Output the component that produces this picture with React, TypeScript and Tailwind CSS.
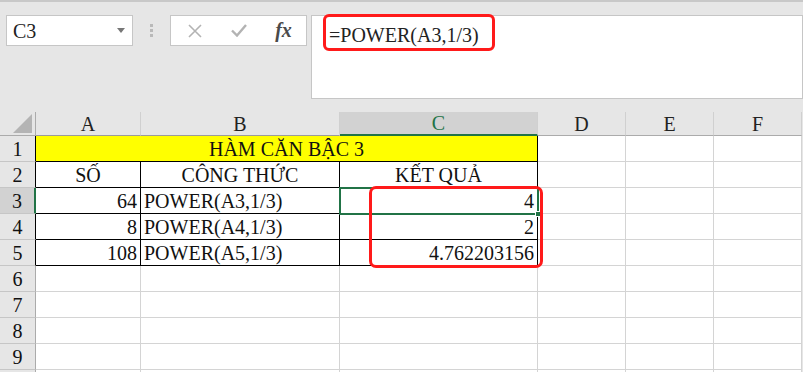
import React from 'react';

const cols = ['A', 'B', 'C', 'D', 'E', 'F'];

type Cell = { v: string; align?: 'left' | 'right' | 'center' };

const rows: Cell[][] = [
  [{ v: 'SỐ', align: 'center' }, { v: 'CÔNG THỨC', align: 'center' }, { v: 'KẾT QUẢ', align: 'center' }],
  [{ v: '64', align: 'right' }, { v: 'POWER(A3,1/3)', align: 'left' }, { v: '4', align: 'right' }],
  [{ v: '8', align: 'right' }, { v: 'POWER(A4,1/3)', align: 'left' }, { v: '2', align: 'right' }],
  [{ v: '108', align: 'right' }, { v: 'POWER(A5,1/3)', align: 'left' }, { v: '4.762203156', align: 'right' }],
];

const alignCls = {
  left: 'justify-start pl-[3px]',
  right: 'justify-end pr-[3px]',
  center: 'justify-center',
};

const RowHead = ({ n, table, active }: { n?: number; table?: boolean; active?: boolean }) => (
  <div
    className={`flex h-[26px] items-center justify-center border-b border-b-[#c6c6c6] ${
      active ? 'border-r-2 border-r-[#217346] bg-[#d2d2d2]' : table ? 'border-r border-r-black bg-[#e6e6e6]' : 'border-r border-r-[#ababab] bg-[#e6e6e6]'
    }`}
  >
    {n}
  </div>
);

const Blank = () => <div className="h-[26px] border-b border-r border-[#d4d4d4] bg-white" />;

export default function App() {
  return (
    <div className="relative h-[372px] w-[803px] overflow-hidden bg-[#e6e6e6] font-['Liberation_Serif',serif] text-[20px] text-black">
      {/* formula toolbar */}
      <div className="h-[112px] border-t-2 border-t-[#c8c8c8] pt-[13px]">
        <div className="flex items-start">
          <div className="ml-[6px] flex h-[31px] w-[127px] items-center justify-between border border-[#c6c6c6] bg-white pl-[6px] pr-[7px] text-[#222]">
            <span>C3</span>
            <svg width="8" height="5" viewBox="0 0 8 5">
              <path d="M0 0h8L4 5z" fill="#777" />
            </svg>
          </div>
          <div className="flex h-[31px] w-[37px] items-center justify-center">
            <svg width="4" height="14" viewBox="0 0 4 14">
              <rect x="0" y="0" width="3" height="3" fill="#b9b9b9" />
              <rect x="0" y="5" width="3" height="3" fill="#b9b9b9" />
              <rect x="0" y="10" width="3" height="3" fill="#b9b9b9" />
            </svg>
          </div>
          <div className="flex h-[31px] w-[137px] items-center border border-[#c6c6c6] bg-white">
            <div className="flex w-[45px] justify-center pl-[2px]">
              <svg width="14" height="14" viewBox="0 0 14 14">
                <path d="M1 1l12 12M13 1L1 13" stroke="#b3b3b3" strokeWidth="1.6" />
              </svg>
            </div>
            <div className="flex w-[45px] justify-center">
              <svg width="16" height="13" viewBox="0 0 16 13">
                <path d="M1 6.5l5 5L15 1" stroke="#b3b3b3" strokeWidth="2.4" fill="none" />
              </svg>
            </div>
            <div className="flex w-[45px] justify-center pb-[2px] text-[20px] font-semibold italic text-[#4a4a4a]">fx</div>
          </div>
          <div className="relative ml-[4px] h-[84px] flex-1 border border-[#c6c6c6] bg-white pl-[17px] pt-[4px] text-[#222]">
            =POWER(A3,1/3)
            <div className="absolute left-[11px] top-[-2px] h-[37px] w-[172px] rounded-[6px] border-[3px] border-[#ff1a1a]" />
          </div>
        </div>
      </div>

      {/* sheet grid */}
      <div className="relative grid grid-cols-[36px_105px_199px_198px_88px_88px_88px] text-[#111]">
        {/* header row */}
        <div className="flex h-[24px] items-end justify-end border-b border-r border-[#ababab] bg-[#e6e6e6] pb-[2px] pr-[3px]">
          <svg width="19" height="19" viewBox="0 0 19 19">
            <path d="M19 0V19H0z" fill="#b4b4b4" />
          </svg>
        </div>
        {cols.map((c) =>
          c === 'C' ? (
            <div
              key={c}
              className="flex h-[24px] items-center justify-center border-b-2 border-r border-b-[#217346] border-r-[#d0d0d0] bg-[#d2d2d2] text-[#217346]"
            >
              {c}
            </div>
          ) : (
            <div
              key={c}
              className={`flex h-[24px] items-center justify-center border-b border-r border-r-[#d0d0d0] bg-[#e6e6e6] text-[#222] ${
                c === 'A' || c === 'B' ? 'border-b-[#9b9b9b]' : 'border-b-[#ababab]'
              }`}
            >
              {c}
            </div>
          )
        )}

        {/* row 1 */}
        <RowHead n={1} table />
        <div className="col-span-3 flex h-[26px] items-center justify-center border-b border-r border-black bg-[#ffff00]">
          HÀM CĂN BẬC 3
        </div>
        <Blank />
        <Blank />
        <Blank />

        {/* rows 2-5 */}
        {rows.map((r, i) => (
          <React.Fragment key={i}>
            <RowHead n={i + 2} table active={i === 1} />
            {r.map((cell, j) => (
              <div
                key={j}
                className={`flex h-[26px] items-center border-b border-r border-black bg-white ${alignCls[cell.align ?? 'left']}`}
              >
                {cell.v}
              </div>
            ))}
            <Blank />
            <Blank />
            <Blank />
          </React.Fragment>
        ))}

        {/* empty rows */}
        {[6, 7, 8, 9, 0].map((n) => (
          <React.Fragment key={n}>
            <RowHead n={n || undefined} />
            {cols.map((c) => (
              <Blank key={c} />
            ))}
          </React.Fragment>
        ))}

        {/* selection on C3 */}
        <div className="pointer-events-none absolute left-[339px] top-[75px] h-[28px] w-[200px] border-2 border-[#217346]">
          <div className="absolute bottom-[-4px] right-[-4px] h-[6px] w-[6px] border border-white bg-[#217346]" />
        </div>
        {/* red annotation around results */}
        <div className="pointer-events-none absolute left-[369px] top-[74px] h-[82px] w-[174px] rounded-[7px] border-[3px] border-[#ff1a1a]" />
      </div>
    </div>
  );
}
